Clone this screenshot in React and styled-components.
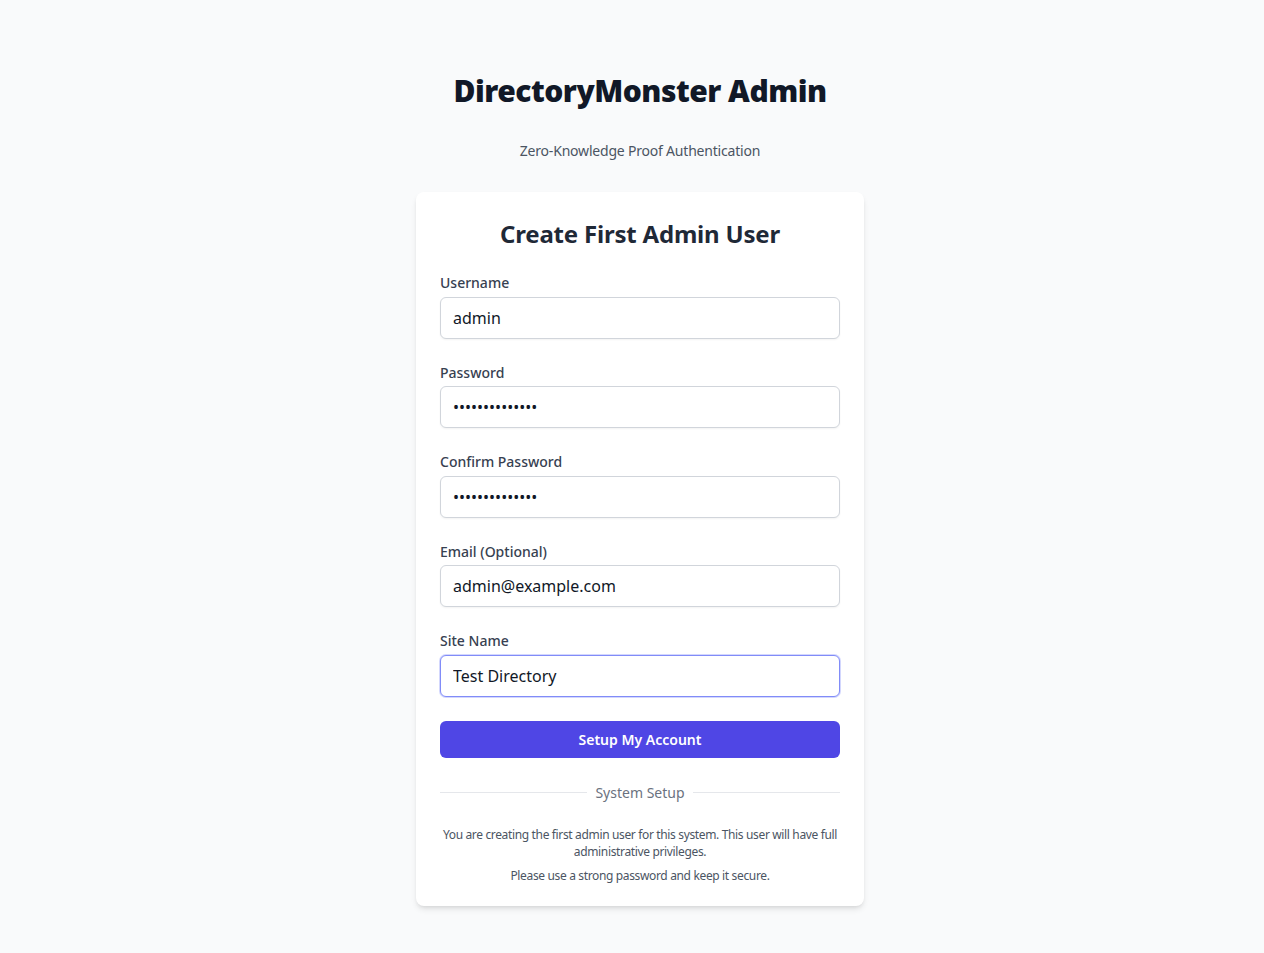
import { createGlobalStyle, styled } from "styled-components";

const GlobalStyle = createGlobalStyle`
  * { box-sizing: border-box; }
  body {
    margin: 0;
    background: #f9fafb;
    font-family: "Noto Sans", "Open Sans", sans-serif;
    color: #111827;
  }
`;

const fields = [
  { label: "Username", type: "text", value: "admin" },
  { label: "Password", type: "password", value: "supersecret123" },
  { label: "Confirm Password", type: "password", value: "supersecret123" },
  { label: "Email (Optional)", type: "email", value: "admin@example.com" },
  { label: "Site Name", type: "text", value: "Test Directory", focused: true },
];

const App = () => {
  return (
    <>
      <GlobalStyle />
      <St.Page>
        <St.Title>DirectoryMonster Admin</St.Title>
        <St.Subtitle>Zero-Knowledge Proof Authentication</St.Subtitle>
        <St.Card>
          <St.CardTitle>Create First Admin User</St.CardTitle>
          <St.Form onSubmit={(e) => e.preventDefault()}>
            {fields.map((f) => (
              <St.Field key={f.label}>
                <St.Label>{f.label}</St.Label>
                <St.Input
                  type={f.type}
                  defaultValue={f.value}
                  autoFocus={f.focused}
                  $focused={f.focused}
                />
              </St.Field>
            ))}
            <St.Button type="submit">Setup My Account</St.Button>
          </St.Form>
          <St.Divider>
            <span>System Setup</span>
          </St.Divider>
          <St.Note>
            You are creating the first admin user for this system. This user
            will have full administrative privileges.
          </St.Note>
          <St.Note>Please use a strong password and keep it secure.</St.Note>
        </St.Card>
      </St.Page>
    </>
  );
};

export default App;

const St = {
  Page: styled.main`
    display: flex;
    flex-direction: column;
    align-items: center;
    padding: 73px 0 48px 16px;
  `,
  Title: styled.h1`
    margin: 0;
    font-size: 30px;
    line-height: 36px;
    font-weight: 900;
    color: #111827;
    letter-spacing: -0.5px;
  `,
  Subtitle: styled.p`
    margin: 32px 0 0;
    font-size: 14px;
    line-height: 20px;
    color: #4b5563;
    letter-spacing: -0.2px;
  `,
  Card: styled.section`
    margin-top: 31px;
    width: 448px;
    padding: 26px 24px 22px;
    background: #fff;
    border-radius: 8px;
    box-shadow: 0 4px 6px -1px rgba(0, 0, 0, 0.1),
      0 2px 4px -2px rgba(0, 0, 0, 0.1);
  `,
  CardTitle: styled.h2`
    margin: 0 0 23px;
    text-align: center;
    font-size: 24px;
    line-height: 32px;
    font-weight: 700;
    color: #1f2937;
    letter-spacing: -0.2px;
  `,
  Form: styled.form`
    display: flex;
    flex-direction: column;
    gap: 24px;
  `,
  Field: styled.div`
    display: flex;
    flex-direction: column;
    gap: 3.5px;
  `,
  Label: styled.label`
    font-size: 14px;
    line-height: 20px;
    font-weight: 500;
    color: #374151;
  `,
  Input: styled.input`
    height: 42px;
    padding: 0 12px;
    font-family: inherit;
    font-size: 16px;
    color: #111827;
    background: #fff;
    border: 1px solid ${({ $focused }) => ($focused ? "#818cf8" : "#d1d5db")};
    border-radius: 6px;
    box-shadow: ${({ $focused }) =>
      $focused
        ? "0 0 0 1px rgba(129, 140, 248, 0.35)"
        : "0 1px 2px 0 rgba(0, 0, 0, 0.05)"};
    outline: none;

    &:focus {
      border-color: #818cf8;
      box-shadow: 0 0 0 1px rgba(129, 140, 248, 0.35);
    }
  `,
  Button: styled.button`
    height: 37px;
    border: none;
    border-radius: 6px;
    background: #4f46e5;
    color: #fff;
    font-family: inherit;
    font-size: 14px;
    font-weight: 600;
    cursor: pointer;
  `,
  Divider: styled.div`
    margin-top: 25px;
    display: flex;
    align-items: center;
    gap: 8px;
    font-size: 14px;
    line-height: 20px;
    color: #6b7280;

    &::before,
    &::after {
      content: "";
      flex: 1;
      height: 1px;
      background: #e5e7eb;
    }
  `,
  Note: styled.p`
    margin: 23px 0 0;
    text-align: center;
    font-size: 12px;
    line-height: 17px;
    color: #4b5563;
    letter-spacing: -0.35px;

    & + & {
      margin-top: 7px;
    }
  `,
};
